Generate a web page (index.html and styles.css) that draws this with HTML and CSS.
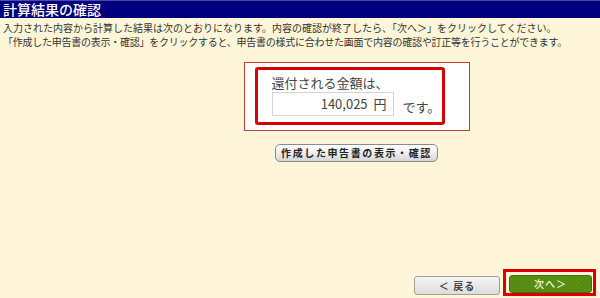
FILE: index.html
```html
<!DOCTYPE html>
<html lang="ja">
<head>
<meta charset="utf-8">
<title>計算結果の確認</title>
<link rel="stylesheet" href="styles.css">
</head>
<body>
<div class="page">
  <h1 class="title">計算結果の確認</h1>
  <div class="desc">
    <p>入力された内容から計算した結果は次のとおりになります。内容の確認が終了したら、「次へ＞」をクリックしてください。</p>
    <p class="tight">「作成した申告書の表示・確認」をクリックすると、申告書の様式に合わせた画面で内容の確認や訂正等を行うことができます。</p>
  </div>
  <div class="center">
    <div class="result-outer">
      <div class="result-inner">
        <div class="label">還付される金額は、</div>
        <div class="amount-row">
          <div class="amount">140,025 円</div>
          <span class="desu">です。</span>
        </div>
      </div>
    </div>
    <button class="btn-view">作成した申告書の表示・確認</button>
  </div>
  <div class="nav">
    <button class="btn-back">＜ 戻る</button>
    <div class="next-frame"><button class="btn-next">次へ＞</button></div>
  </div>
</div>
</body>
</html>
```
FILE: styles.css
```css
html, body {
  margin: 0;
  padding: 0;
}
body {
  background: #fff6da;
  font-family: "Noto Sans CJK JP", "Noto Sans", sans-serif;
  color: #222;
}
.page {
  height: 298px;
  display: flex;
  flex-direction: column;
}
.title {
  margin: 0;
  height: 18px;
  background: #00007e;
  border-top: 1px solid #4a4aa8;
  box-sizing: border-box;
  color: #fff;
  font-size: 14px;
  font-weight: 500;
  line-height: 16px;
  padding-left: 3px;
  letter-spacing: 0;
}
.desc {
  padding: 3px 0 0 3px;
  font-size: 10px;
  line-height: 14px;
  color: #333;
}
.desc p {
  margin: 0;
  white-space: nowrap;
}
.desc p.tight {
  letter-spacing: -0.25px;
}
.center {
  display: flex;
  flex-direction: column;
  align-items: center;
  padding-left: 113px;
  margin-top: 13px;
}
.result-outer {
  width: 226px;
  height: 69px;
  box-sizing: border-box;
  background: #fff;
  border: 1px solid #c43c3c;
  padding: 4px 24px 5px 10px;
}
.result-inner {
  height: 58px;
  box-sizing: border-box;
  border: 3px solid #d80000;
  border-radius: 3px;
  padding: 5px 0 0 14px;
  color: #444;
}
.label {
  font-size: 13px;
  line-height: 16px;
}
.amount-row {
  display: flex;
  align-items: center;
  margin-top: 1px;
}
.amount {
  width: 122px;
  height: 24px;
  box-sizing: border-box;
  border: 1px solid #d4d4d4;
  text-align: right;
  padding-right: 6px;
  font-size: 13px;
  line-height: 22px;
  word-spacing: 3px;
}
.desu {
  margin-left: 9px;
  font-size: 13px;
  line-height: 16px;
  margin-top: 6px;
}
.btn-view {
  margin-top: 13px;
  width: 163px;
  height: 18px;
  padding: 0;
  border: 1px solid #8a8a8a;
  border-radius: 5px;
  background: linear-gradient(#ffffff, #f0f0f0 45%, #d6d6d6);
  font-family: "Noto Sans CJK JP", sans-serif;
  font-size: 10px;
  font-weight: bold;
  letter-spacing: 1.6px;
  color: #222;
  line-height: 16px;
}
.nav {
  margin-top: auto;
  display: flex;
  justify-content: flex-end;
  align-items: flex-end;
  padding: 0 4px 2px 0;
  gap: 3px;
}
.btn-back {
  width: 86px;
  height: 19px;
  margin-bottom: 1px;
  padding: 0;
  border: 1px solid #a0a0a0;
  border-radius: 3px;
  background: linear-gradient(#f6f6f6, #dcdcdc);
  font-family: "Noto Sans CJK JP", sans-serif;
  font-size: 10px;
  font-weight: bold;
  color: #444;
  letter-spacing: 1px;
  line-height: 17px;
}
.next-frame {
  border: 3px solid #d80000;
  padding: 3px 1px 0 3px;
  height: 27px;
  box-sizing: border-box;
}
.btn-next {
  display: block;
  width: 83px;
  height: 18px;
  padding: 0;
  border: 1px solid #456f0c;
  border-radius: 3px;
  background: repeating-linear-gradient(135deg, #548a12 0 2px, #5c9216 2px 3px);
  color: #f4f8ea;
  font-family: "Noto Sans CJK JP", sans-serif;
  font-size: 10px;
  font-weight: 500;
  letter-spacing: 1px;
  line-height: 16px;
}
```
